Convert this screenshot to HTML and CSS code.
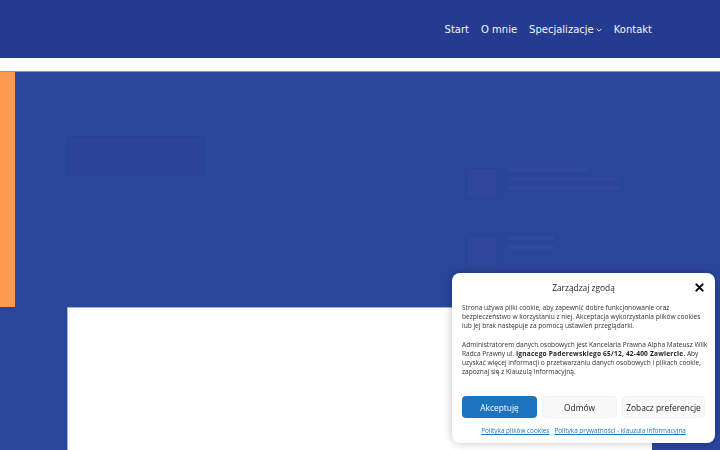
FILE: index.html
```html
<!DOCTYPE html>
<html lang="pl">
<head>
<meta charset="utf-8">
<title>Kancelaria</title>
<link rel="stylesheet" href="styles.css">
</head>
<body>
<header class="site-header">
  <div class="container header-inner">
    <nav class="main-nav">
      <a href="#">Start</a>
      <a href="#">O mnie</a>
      <a href="#" class="has-sub">Specjalizacje<svg class="chev" viewBox="0 0 10 6" width="6" height="4"><path d="M1 1l4 4 4-4" fill="none" stroke="currentColor" stroke-width="1.6"/></svg></a>
      <a href="#">Kontakt</a>
    </nav>
  </div>
</header>
<div class="band"></div>
<section class="hero">
  <div class="container hero-inner">
    <div class="hero-left">
      <div class="ghost-box"></div>
    </div>
    <div class="hero-right">
      <div class="contact-item">
        <div class="ci-icon"></div>
        <div class="ci-text"><span class="l1"></span><span class="l2"></span><span class="l3"></span></div>
      </div>
      <div class="contact-item">
        <div class="ci-icon"></div>
        <div class="ci-text"><span class="l1 s"></span><span class="l2 s"></span></div>
      </div>
    </div>
  </div>
</section>
<section class="content">
  <div class="container">
    <div class="white-box"></div>
  </div>
</section>

<div class="cookie">
  <div class="cookie-head">
    <span class="cookie-title">Zarządzaj zgodą</span>
    <svg class="cookie-close" viewBox="0 0 10 10" width="9" height="9"><path d="M1.5 1.5l7 7M8.5 1.5l-7 7" stroke="#000" stroke-width="2.2" stroke-linecap="round"/></svg>
  </div>
  <div class="cookie-body">
    <p>Strona używa pliki cookie, aby zapewnić dobre funkcjonowanie oraz bezpieczeństwo w korzystaniu z niej. Akceptacja wykorzystania plików cookies<br>lub jej brak następuje za pomocą ustawień przeglądarki.</p>
    <p>Administratorem danych osobowych jest Kancelaria Prawna Alpha Mateusz Wilk Radca Prawny ul. <b>Ignacego Paderewskiego 65/12, 42-400 Zawiercie</b>. Aby uzyskać więcej informacji o przetwarzaniu danych osobowych i plikach cookie, zapoznaj się z Klauzulą Informacyjną.</p>
  </div>
  <div class="cookie-buttons">
    <button class="btn btn-accept">Akceptuję</button>
    <button class="btn btn-light">Odmów</button>
    <button class="btn btn-light">Zobacz preferencje</button>
  </div>
  <div class="cookie-links">
    <a href="#">Polityka plików cookies</a>
    <a href="#">Polityka prywatności - klauzula informacyjna</a>
  </div>
</div>
</body>
</html>
```
FILE: styles.css
```css
* { box-sizing: border-box; }
html, body { margin: 0; padding: 0; }
body {
  background: #2a459c;
  font-family: "DejaVu Sans", sans-serif;
  height: 450px;
  overflow: hidden;
}
.container {
  width: 585px;
  margin-left: 67px;
}
.site-header {
  background: #243b8f;
  height: 58px;
}
.header-inner {
  height: 58px;
  display: flex;
  justify-content: flex-end;
  align-items: center;
}
.main-nav {
  display: flex;
  gap: 12px;
}
.main-nav a {
  color: #f2f4fa;
  text-decoration: none;
  font-size: 10px;
  display: flex;
  align-items: center;
}
.chev { margin-left: 2px; margin-top: 2px; }
.band {
  height: 14px;
  background: #fff;
  border-bottom: 1px solid #8b9bd0;
}
.hero {
  height: 235px;
  background: #2a469c;
  border-left: 15px solid #fd9a4f;
}
.hero-inner {
  margin-left: 52px;
  display: flex;
  justify-content: space-between;
  height: 100%;
}
.ghost-box {
  margin-top: 64px;
  width: 137px;
  height: 39px;
  border: 1px solid rgba(20, 40, 110, 0.12);
  background: rgba(30, 50, 130, 0.06);
}
.hero-right {
  margin-top: 96px;
  width: 185px;
  display: flex;
  flex-direction: column;
  gap: 38px;
}
.contact-item { display: flex; gap: 12px; }
.ci-icon {
  width: 30px;
  height: 30px;
  background: #30479c;
  border: 1px solid #2b4396;
}
.ci-text { display: flex; flex-direction: column; gap: 5px; }
.ci-text span { display: block; height: 4px; background: #30489d; }
.ci-text .l1 { width: 80px; }
.ci-text .l2 { width: 110px; }
.ci-text .l3 { width: 110px; }
.ci-text .s { width: 45px; }
.content { background: #2a459c; }
.white-box {
  background: #fff;
  height: 160px;
  border-top: 1px solid #a5b2dc;
  border-left: 1px solid #a5b2dc;
}

.cookie {
  position: fixed;
  left: 452px;
  top: 273px;
  width: 263px;
  height: 170px;
  background: #fff;
  border-radius: 8px;
  box-shadow: 0 0 8px rgba(0,0,0,0.25);
  padding: 8px 2px 0 10px;
  font-family: "Open Sans", sans-serif;
  color: #222;
}
.cookie-head {
  display: flex;
  justify-content: center;
  align-items: center;
  position: relative;
  height: 12px;
  margin-right: 8px;
}
.cookie-title { font-size: 8.4px; color: #222; }
.cookie-close { position: absolute; right: 1px; top: 2px; }
.cookie-body { margin-top: 10px; }
.cookie-body p {
  margin: 0 0 9px 0;
  font-size: 6.6px;
  line-height: 9.2px;
  color: #333;
}
.cookie-body b { font-weight: bold; letter-spacing: 0.2px; color: #222; }
.cookie-buttons {
  display: flex;
  gap: 5px;
  margin-top: 20px;
}
.btn {
  height: 22px;
  border: none;
  border-radius: 4px;
  font-family: "Open Sans", sans-serif;
  font-size: 8.4px;
  padding: 0;
}
.btn-accept { background: #1e73be; color: #fff; width: 75px; }
.btn-light { background: #f9f9f9; color: #222; width: 75px; border: 1px solid #f2f2f2; }
.btn-light:last-child { width: 83px; }
.cookie-links {
  margin-top: 8px;
  display: flex;
  justify-content: center;
  gap: 5px;
  margin-right: 8px;
}
.cookie-links a {
  color: #1e73be;
  font-size: 6.4px;
  text-decoration: underline;
}
```
